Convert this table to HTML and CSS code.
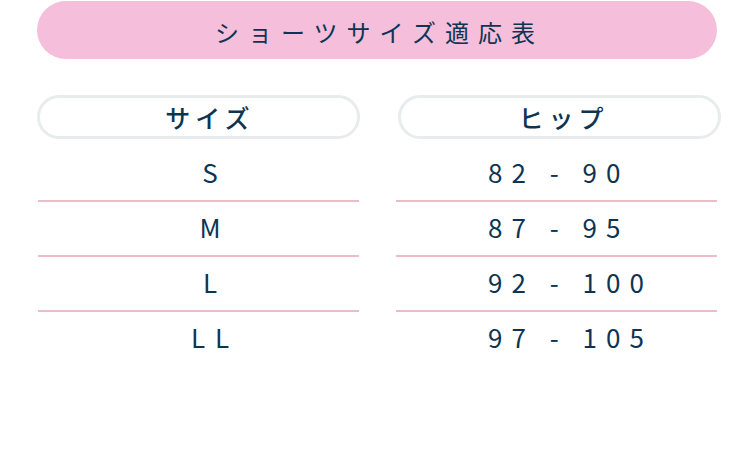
FILE: index.html
```html
<!DOCTYPE html>
<html lang="ja">
<head>
<meta charset="utf-8">
<link rel="stylesheet" href="styles.css">
</head>
<body>
<div class="page">
  <h1 class="title">ショーツサイズ適応表</h1>
  <div class="table">
    <div class="col col-left">
      <div class="head">サイズ</div>
      <div class="cell">S</div>
      <div class="cell">M</div>
      <div class="cell">L</div>
      <div class="cell last">LL</div>
    </div>
    <div class="col col-right">
      <div class="head">ヒップ</div>
      <div class="cell num">82 - 90</div>
      <div class="cell num">87 - 95</div>
      <div class="cell num">92 - 100</div>
      <div class="cell num last">97 - 105</div>
    </div>
  </div>
</div>
</body>
</html>
```

FILE: styles.css
```css
html, body {
  margin: 0;
  padding: 0;
  background: #ffffff;
}
body {
  font-family: "Noto Sans CJK JP", "Noto Sans", sans-serif;
  color: #0d3552;
}
.page {
  width: 750px;
  height: 461px;
  padding: 1px 0 0 37px;
  box-sizing: border-box;
}
.title {
  margin: 0;
  width: 680px;
  height: 58px;
  border-radius: 29px;
  background: #f5bedb;
  display: flex;
  align-items: center;
  justify-content: center;
  font-size: 24px;
  font-weight: 400;
  letter-spacing: 9px;
  padding: 2px 0 0 5px;
  box-sizing: border-box;
}
.table {
  display: flex;
  gap: 38px;
  margin-top: 36px;
}
.col {
  width: 323px;
  display: flex;
  flex-direction: column;
}
.head {
  height: 44px;
  box-sizing: border-box;
  border: 3px solid #e8ecec;
  border-radius: 22px;
  display: flex;
  align-items: center;
  justify-content: center;
  font-size: 25px;
  font-weight: 500;
  letter-spacing: 5px;
  padding-left: 8px;
  margin-bottom: 8px;
}
.col-left .head {
  padding-left: 23px;
}
.cell {
  height: 49px;
  border-bottom: 2px solid #ecbcc7;
  display: flex;
  align-items: center;
  justify-content: center;
  font-size: 26px;
  letter-spacing: 10px;
  padding-left: 33px;
  padding-bottom: 4px;
  line-height: 1;
}
.col-left .cell {
  margin: 0 1px;
}
.col-right .cell {
  margin: 0 4px 0 -2px;
}
.cell.last {
  border-bottom-color: transparent;
}
.num {
  justify-content: flex-start;
  letter-spacing: 9px;
  padding-left: 92px;
}
```
